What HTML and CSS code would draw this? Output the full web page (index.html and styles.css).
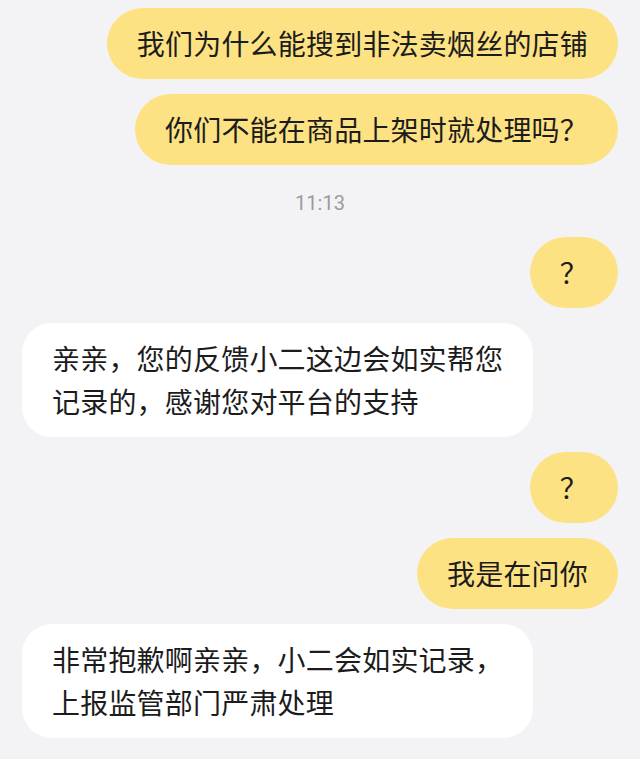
FILE: index.html
```html
<!DOCTYPE html>
<html lang="zh-CN">
<head>
<meta charset="utf-8">
<title>聊天记录</title>
<link rel="stylesheet" href="styles.css">
</head>
<body>
<div class="chat">
  <div class="row me"><div class="bubble yellow">我们为什么能搜到非法卖烟丝的店铺</div></div>
  <div class="row me"><div class="bubble yellow">你们不能在商品上架时就处理吗？</div></div>
  <div class="time">11:13</div>
  <div class="row me"><div class="bubble yellow">？</div></div>
  <div class="row them"><div class="bubble white">亲亲，您的反馈小二这边会如实帮您<br>记录的，感谢您对平台的支持</div></div>
  <div class="row me"><div class="bubble yellow">？</div></div>
  <div class="row me"><div class="bubble yellow">我是在问你</div></div>
  <div class="row them"><div class="bubble white">非常抱歉啊亲亲，小二会如实记录，<br>上报监管部门严肃处理</div></div>
</div>
</body>
</html>
```

FILE: styles.css
```css
html, body {
  margin: 0;
  padding: 0;
  background: #f3f3f5;
}
body {
  width: 640px;
  height: 759px;
  overflow: hidden;
  font-family: "Noto Sans CJK SC", "Noto Sans", sans-serif;
  color: #1c1c1c;
}
.chat {
  display: flex;
  flex-direction: column;
  gap: 15px;
  padding: 8px 22px 0;
}
.row {
  display: flex;
}
.row.me {
  justify-content: flex-end;
}
.row.them {
  justify-content: flex-start;
}
.bubble {
  font-size: 28px;
  line-height: 43px;
  letter-spacing: 0.2px;
  padding: 14px 30px;
  white-space: nowrap;
}
.yellow {
  background: #fde283;
  border-radius: 36px;
}
.white {
  background: #ffffff;
  border-radius: 30px;
}
.time {
  text-align: center;
  font-family: Roboto, "Noto Sans", sans-serif;
  font-size: 20px;
  line-height: 28px;
  color: #9b9b9d;
  margin: 9px 0 5px;
}
```
